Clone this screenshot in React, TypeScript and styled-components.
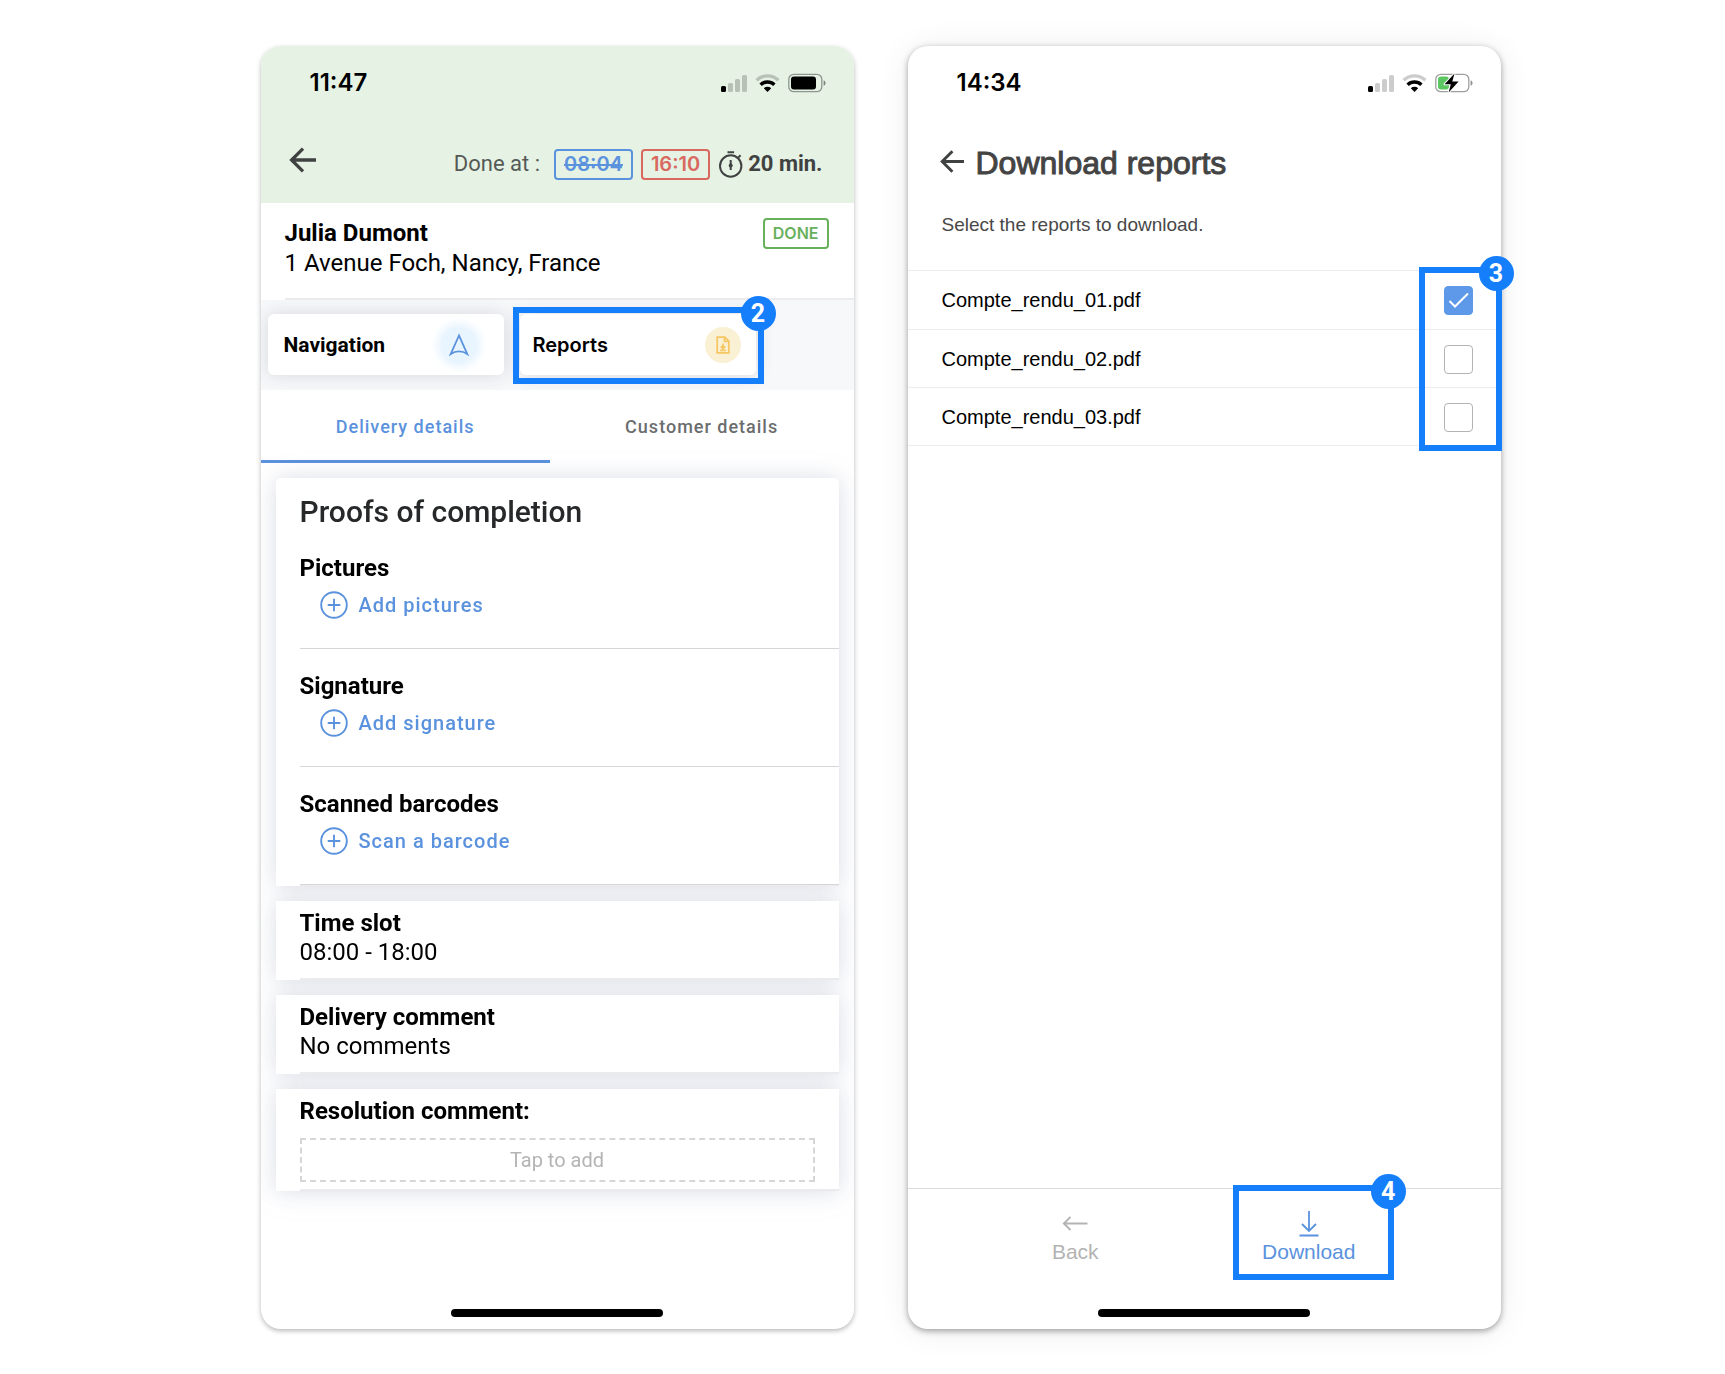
import React, { useState } from 'react';
import styled, { createGlobalStyle } from 'styled-components';

const BLUE = '#5b92dd';
const MARK = '#147efb';
const GREEN = '#68b05c';
const RED = '#d9695f';
const INK = '#404242';

const GlobalStyle = createGlobalStyle`
  * { box-sizing: border-box; }
  body { margin: 0; background: #fff; color: #000; font-family: Roboto, "Noto Sans", sans-serif; }
  button { border: 0; padding: 0; background: none; color: inherit; font: inherit; cursor: pointer; }
  h1, h2, h3, p, ul { margin: 0; padding: 0; font: inherit; }
  svg { display: block; flex: none; }
`;

const Stage = styled.main`
  display: flex;
  justify-content: center;
  align-items: stretch;
  gap: 54px;
  min-height: 100vh;
  padding: 46px 0 45px 36px;
`;

const Phone = styled.section<{ $clip?: boolean }>`
  flex: 0 1 593px;
  display: flex;
  flex-direction: column;
  background: #fff;
  border-radius: 20px;
  overflow: ${p => (p.$clip ? 'hidden' : 'visible')};
  box-shadow: ${p =>
    p.$clip
      ? '0 2px 5px rgba(0, 0, 0, 0.28)'
      : '0 2px 6px rgba(0, 0, 0, 0.36), 0 2px 32px rgba(0, 0, 0, 0.08)'};
`;

const ReportsScreen = styled(Phone)`
  font-family: "Liberation Sans", Arial, sans-serif;
`;

const Status = styled.div`
  display: flex;
  align-items: center;
  justify-content: space-between;
  height: 74px;
  padding: 0 28px 0 49px;
`;

const Clock = styled.time`
  font: 600 24px/30px Inter, sans-serif;
`;

const StatusIcons = styled.div`
  display: flex;
  align-items: center;
  gap: 8px;
`;

const HomeBar = styled.div`
  width: 212px;
  height: 8px;
  margin: auto auto 12px;
  border-radius: 4px;
  background: #000;
`;

/* ---- delivery screen ---- */

const GreenHeader = styled.header`
  background: #e5f2e4;
`;

const HeaderRow = styled.div`
  display: flex;
  align-items: center;
  justify-content: space-between;
  height: 83px;
  padding: 0 31px 3px 27px;
`;

const DoneAt = styled.div`
  display: flex;
  align-items: center;
  padding-top: 8px;
  color: ${INK};
  font-size: 22px;
  line-height: 30px;
`;

const DoneLabel = styled.span`
  margin-right: 14px;
  color: #555a57;
`;

const Tag = styled.span<{ $color: string; $struck?: boolean; $size?: number }>`
  padding: 0 8px;
  border: 2px solid ${p => p.$color};
  border-radius: 4px;
  color: ${p => p.$color};
  font: 600 ${p => p.$size || 20}px/27px Inter, sans-serif;
  text-decoration: ${p => (p.$struck ? 'line-through' : 'none')};
  & + & { margin-left: 8px; }
`;

const Duration = styled.strong`
  display: flex;
  align-items: center;
  gap: 5px;
  margin-left: 9px;
  font-weight: 700;
`;

const Customer = styled.div`
  display: flex;
  align-items: flex-start;
  justify-content: space-between;
  margin-left: 24px;
  padding: 15px 25px 20px 0;
  border-bottom: 2px solid #ececee;
  font-size: 24px;
  line-height: 30px;
`;

const Name = styled.h1`
  font-weight: 700;
`;

const Actions = styled.nav`
  display: flex;
  gap: 16px;
  padding: 14px 7px 15px;
  background: #f7f8fa;
`;

const ActionSlot = styled.div`
  position: relative;
  width: 236px;
`;

const Action = styled.button<{ $plain?: boolean }>`
  display: flex;
  align-items: center;
  justify-content: space-between;
  width: 100%;
  height: 61px;
  padding: 0 ${p => (p.$plain ? 15 : 27)}px 0 ${p => (p.$plain ? 13 : 16)}px;
  border-radius: 6px;
  background: #fff;
  box-shadow: 0 0 18px rgba(50, 50, 60, 0.16);
  font: ${p => (p.$plain ? '600 20px/24px Inter' : '700 21px/24px Roboto')}, sans-serif;
`;

const Bubble = styled.span<{ $bg: string; $glow?: boolean }>`
  display: grid;
  place-items: center;
  width: 36px;
  height: 36px;
  border-radius: 50%;
  background: ${p => p.$bg};
  box-shadow: ${p => (p.$glow ? `0 0 8px 4px ${p.$bg}` : 'none')};
`;

const Highlight = styled.div`
  position: absolute;
  border: 6px solid ${MARK};
  pointer-events: none;
`;

const ReportsHighlight = styled(Highlight)`
  inset: -7px -8px -9px -7px;
`;

const RowsHighlight = styled(Highlight)`
  inset: -4px -1px -5px auto;
  width: 83px;
`;

const DownloadHighlight = styled(Highlight)`
  top: -4px;
  left: calc(50% - 76px);
  width: 161px;
  height: 95px;
`;

const Step = styled.span`
  position: absolute;
  top: -17px;
  right: -18px;
  width: 35px;
  height: 35px;
  border-radius: 50%;
  background: ${MARK};
  color: #fff;
  font: 700 25px/35px Roboto, sans-serif;
  text-align: center;
`;

const Tabs = styled.div`
  display: flex;
  height: 73px;
`;

const Tab = styled.button<{ $active?: boolean }>`
  flex: 1 1 auto;
  border-top: 3px solid transparent;
  border-bottom: 3px solid ${p => (p.$active ? BLUE : 'transparent')};
  color: ${p => (p.$active ? BLUE : '#6b6d6e')};
  font-size: 18px;
  font-weight: 500;
  letter-spacing: 1px;
`;

const Cards = styled.div`
  display: flex;
  flex-direction: column;
  gap: 15px;
  padding: 15px;
  filter: drop-shadow(0 0 10px rgba(60, 60, 100, 0.12)) drop-shadow(0 2px 16px rgba(90, 110, 160, 0.08));
`;

const Card = styled.section<{ $rounded?: boolean }>`
  padding: 8px 24px 13px;
  border-radius: ${p => (p.$rounded ? '5px 5px 0 0' : '0')};
  background: linear-gradient(#ebebee, #ebebee) 24px 100% / 100% 2px no-repeat, #fff;
  font-size: 24px;
  line-height: 29px;
`;

const ProofCard = styled(Card)`
  padding: 15px 0 1px 24px;
`;

const CommentCard = styled(Card)`
  padding-bottom: 9px;
`;

const CardTitle = styled.h2`
  color: #262829;
  font-size: 30px;
  font-weight: 500;
  line-height: 38px;
`;

const Label = styled.h3`
  font-weight: 700;
`;

const Proof = styled.div`
  height: 118px;
  padding-top: 23px;
  border-bottom: 1px solid #d6d6d8;
`;

const AddButton = styled.button`
  display: flex;
  align-items: center;
  gap: 11px;
  height: 32px;
  margin: 6px 0 0 20px;
  color: ${BLUE};
  font-size: 20px;
  font-weight: 500;
  letter-spacing: 1px;
`;

const TapToAdd = styled.button`
  display: block;
  width: 100%;
  height: 44px;
  margin-top: 12px;
  border: 2px dashed #d6d6d6;
  color: #b4b4b4;
  font-size: 20px;
`;

/* ---- reports screen ---- */

const TitleRow = styled.header`
  display: flex;
  align-items: center;
  gap: 12px;
  height: 88px;
  padding: 0 0 2px 31px;
  color: #444;
`;

const TitleBack = styled.button`
  && { padding-bottom: 4px; }
`;

const Title = styled.h1`
  font-size: 32px;
  line-height: 40px;
  -webkit-text-stroke: 1px #444;
`;

const Hint = styled.p`
  padding: 5px 34px 33px;
  color: #484848;
  font-size: 19px;
  line-height: 24px;
`;

const Files = styled.ul`
  position: relative;
  list-style: none;
  border-top: 1px solid #ececec;
`;

const FileRow = styled.li`
  border-bottom: 1px solid #ececec;
  &:first-child { padding-bottom: 1px; }
`;

const FileLabel = styled.label`
  display: flex;
  align-items: center;
  justify-content: space-between;
  height: 57px;
  padding: 2px 28px 0 34px;
  font-size: 20px;
`;

const CheckCell = styled.span`
  display: grid;
  > * { grid-area: 1 / 1; place-self: center; }
`;

const Box = styled.input`
  appearance: none;
  width: 29px;
  height: 29px;
  margin: 0;
  border: 1px solid #b3b3b3;
  border-radius: 4px;
  background: #fff;
  &:checked { border-color: #5d99e8; background: #5d99e8; }
`;

const CheckMark = styled.svg`
  z-index: 1;
  pointer-events: none;
`;

const BottomBar = styled.footer`
  display: grid;
  grid-template-columns: 1fr 1fr;
  margin-top: auto;
  padding: 0 75px 0 51px;
  border-top: 1px solid #dcdcdc;
`;

const BarSlot = styled.div`
  position: relative;
`;

const BarButton = styled.button<{ $color: string }>`
  display: flex;
  flex-direction: column;
  align-items: center;
  width: 100%;
  padding: 20px 0 44px;
  color: ${p => p.$color};
  font-size: 21px;
  line-height: 26px;
`;

const BottomHome = styled(HomeBar)`
  margin-top: 0;
`;

const Signal = () => (
  <svg width="26" height="18" viewBox="0 0 26 18">
    <rect x="0" y="12" width="5" height="6" rx="1.5" />
    <g fillOpacity=".2">
      <rect x="7" y="9" width="5" height="9" rx="1.5" />
      <rect x="14" y="5" width="5" height="13" rx="1.5" />
      <rect x="21" y="1" width="5" height="17" rx="1.5" />
    </g>
  </svg>
);

const Wifi = () => (
  <svg width="25" height="18" viewBox="0 0 25 18" fill="none">
    <path d="M1.6 6.3a15.6 15.6 0 0 1 21.8 0" stroke="#000" strokeOpacity=".2" strokeWidth="3.4" />
    <path d="M5.6 10.7a10 10 0 0 1 13.8 0" stroke="#000" strokeWidth="3.4" />
    <path d="M12.5 18 8.8 14.2a5.4 5.4 0 0 1 7.4 0z" fill="#000" />
  </svg>
);

const Battery = ({ charging }: { charging?: boolean }) => (
  <svg width="38" height="20" viewBox="0 0 38 20">
    <rect x=".8" y="1.3" width="33" height="17.4" rx="5" fill="none" stroke="#000" strokeOpacity=".38" strokeWidth="1.3" />
    <path d="M35.6 7.2c2.6.9 2.6 4.7 0 5.6z" fillOpacity=".45" />
    {charging ? (
      <>
        <rect x="3" y="3.6" width="11" height="12.8" rx="3" fill="#5bc662" />
        <path d="M19.5.6 9.6 11.2h6.2l-2.2 8.2 10-10.8h-6.3z" stroke="#fff" strokeWidth="2" paintOrder="stroke" strokeLinejoin="round" />
      </>
    ) : (
      <rect x="3" y="3.6" width="25" height="12.8" rx="3" />
    )}
  </svg>
);

const BackArrow = ({ size }: { size: number }) => (
  <svg width={size} height={size} viewBox="0 0 28 28" fill="none" stroke={INK} strokeWidth="3.3">
    <path d="M15 2.6 3.6 14 15 25.4M3.6 14H28" />
  </svg>
);

const Stopwatch = () => (
  <svg width="24" height="27" viewBox="0 0 24 27" fill="none" stroke={INK} strokeWidth="2">
    <circle cx="11.7" cy="15" r="10.7" />
    <path d="M8.5 1.2h6.6M19.2 6.6l2.4-2.4M11.7 9v10" />
    <circle cx="11.7" cy="14.5" r="2" fill={INK} stroke="none" />
  </svg>
);

const NavIcon = () => (
  <svg width="20" height="23" viewBox="0 0 20 23" fill="none" stroke={BLUE} strokeWidth="1.8">
    <path d="M10 2.5 1.8 21c4.8-3.4 11.6-3.4 16.4 0z" />
  </svg>
);

const FileIcon = () => (
  <svg width="14" height="18" viewBox="0 0 14 18" fill="none" stroke="#f5c661" strokeWidth="1.7">
    <path d="M1.2 1.2h7.6l4 4v11.6H1.2zM8.5 1.5v4h4M7 7.5v5M4.7 10.4 7 12.600l2.300-2.200M4.200 14.300h5.600" />
  </svg>
);

const PlusCircle = () => (
  <svg width="28" height="28" viewBox="0 0 28 28" fill="none" stroke={BLUE} strokeWidth="1.9">
    <circle cx="14" cy="14" r="12.8" />
    <path d="M7.7 14h12.6M14 7.7v12.6" />
  </svg>
);

const proofs = [
  { title: 'Pictures', action: 'Add pictures' },
  { title: 'Signature', action: 'Add signature' },
  { title: 'Scanned barcodes', action: 'Scan a barcode' },
];

const files = ['Compte_rendu_01.pdf', 'Compte_rendu_02.pdf', 'Compte_rendu_03.pdf'];

function StatusBar({ time, charging }: { time: string; charging?: boolean }) {
  return (
    <Status>
      <Clock>{time}</Clock>
      <StatusIcons>
        <Signal />
        <Wifi />
        <Battery charging={charging} />
      </StatusIcons>
    </Status>
  );
}

function Delivery() {
  const [tab, setTab] = useState(0);
  return (
    <Phone $clip>
      <GreenHeader>
        <StatusBar time="11:47" />
        <HeaderRow>
          <button aria-label="Back"><BackArrow size={28} /></button>
          <DoneAt>
            <DoneLabel>Done at :</DoneLabel>
            <Tag $color={BLUE} $struck>08:04</Tag>
            <Tag $color={RED}>16:10</Tag>
            <Duration><Stopwatch />20 min.</Duration>
          </DoneAt>
        </HeaderRow>
      </GreenHeader>
      <Customer>
        <div>
          <Name>Julia Dumont</Name>
          <p>1 Avenue Foch, Nancy, France</p>
        </div>
        <Tag $color={GREEN} $size={16}>DONE</Tag>
      </Customer>
      <Actions>
        <ActionSlot>
          <Action>
            Navigation
            <Bubble $bg="#e8f4fe" $glow><NavIcon /></Bubble>
          </Action>
        </ActionSlot>
        <ActionSlot>
          <Action $plain>
            Reports
            <Bubble $bg="#faf0d3"><FileIcon /></Bubble>
          </Action>
          <ReportsHighlight><Step>2</Step></ReportsHighlight>
        </ActionSlot>
      </Actions>
      <Tabs>
        {['Delivery details', 'Customer details'].map((name, i) => (
          <Tab key={name} $active={tab === i} onClick={() => setTab(i)}>{name}</Tab>
        ))}
      </Tabs>
      <Cards>
        <ProofCard $rounded>
          <CardTitle>Proofs of completion</CardTitle>
          {proofs.map(p => (
            <Proof key={p.title}>
              <Label>{p.title}</Label>
              <AddButton><PlusCircle />{p.action}</AddButton>
            </Proof>
          ))}
        </ProofCard>
        <Card>
          <Label>Time slot</Label>
          <p>08:00 - 18:00</p>
        </Card>
        <Card>
          <Label>Delivery comment</Label>
          <p>No comments</p>
        </Card>
        <CommentCard>
          <Label>Resolution comment:</Label>
          <TapToAdd>Tap to add</TapToAdd>
        </CommentCard>
      </Cards>
      <HomeBar />
    </Phone>
  );
}

function Reports() {
  const [checked, setChecked] = useState([true, false, false]);
  const toggle = (i: number) => setChecked(checked.map((c, j) => (i === j ? !c : c)));
  return (
    <ReportsScreen>
      <StatusBar time="14:34" charging />
      <TitleRow>
        <TitleBack aria-label="Back"><BackArrow size={25} /></TitleBack>
        <Title>Download reports</Title>
      </TitleRow>
      <Hint>Select the reports to download.</Hint>
      <Files>
        {files.map((file, i) => (
          <FileRow key={file}>
            <FileLabel>
              {file}
              <CheckCell>
                <Box type="checkbox" checked={checked[i]} onChange={() => toggle(i)} />
                {checked[i] && (
                  <CheckMark width="21" height="17" viewBox="0 0 21 17" fill="none" stroke="#fff" strokeWidth="2">
                    <path d="m1.5 9 5.5 5.5L20 1.5" />
                  </CheckMark>
                )}
              </CheckCell>
            </FileLabel>
          </FileRow>
        ))}
        <RowsHighlight as="li"><Step>3</Step></RowsHighlight>
      </Files>
      <BottomBar>
        <BarSlot>
          <BarButton $color="#b3b3b3">
            <svg width="26" height="30" viewBox="0 0 26 30" fill="none" stroke="currentColor" strokeWidth="1.8">
              <path d="M8.5 8 1.8 14.5 8.5 21M1.8 14.5H25.5" />
            </svg>
            Back
          </BarButton>
        </BarSlot>
        <BarSlot>
          <BarButton $color={BLUE}>
            <svg width="20" height="30" viewBox="0 0 20 30" fill="none" stroke="currentColor" strokeWidth="1.8">
              <path d="M10 2v20M3 15l7 7 7-7M.5 26.500h19" />
            </svg>
            Download
          </BarButton>
          <DownloadHighlight><Step>4</Step></DownloadHighlight>
        </BarSlot>
      </BottomBar>
      <BottomHome />
    </ReportsScreen>
  );
}

export default function App() {
  return (
    <>
      <GlobalStyle />
      <Stage>
        <Delivery />
        <Reports />
      </Stage>
    </>
  );
}
